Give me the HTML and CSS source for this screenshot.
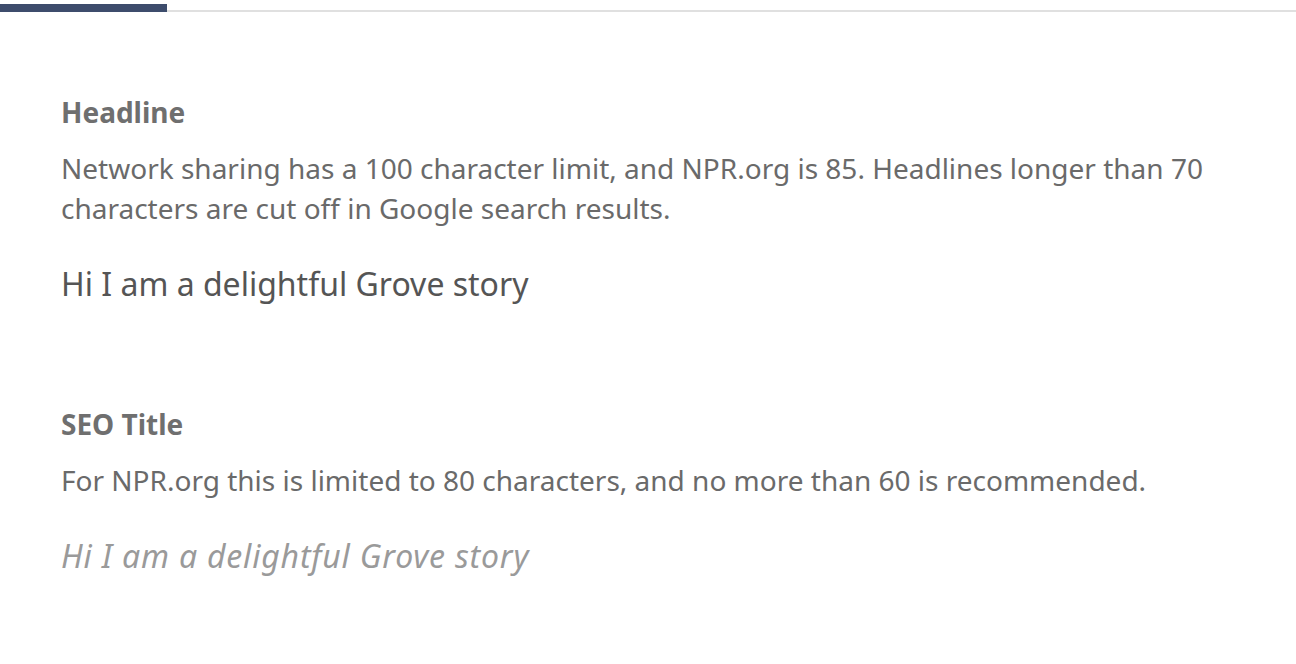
FILE: index.html
```html
<!DOCTYPE html>
<html lang="en">
  <head>
    <meta charset="UTF-8" />
    <meta name="viewport" content="width=device-width, initial-scale=1.0" />
    <title>Story Fields</title>
    <link rel="stylesheet" href="styles.css">
  </head>
  <body>
    <div class="progress">
      <div class="progress-bar"></div>
    </div>

    <div class="fields">
      <div class="field">
        <h3 class="field-label">Headline</h3>
        <p class="field-help">
          Network sharing has a 100 character limit, and NPR.org is 85. Headlines longer than 70
          characters are cut off in Google search results.
        </p>
        <div class="field-value">Hi I am a delightful Grove story</div>
      </div>

      <div class="field">
        <h3 class="field-label">SEO Title</h3>
        <p class="field-help">
          For NPR.org this is limited to 80 characters, and no more than 60 is recommended.
        </p>
        <div class="field-value placeholder">Hi I am a delightful Grove story</div>
      </div>
    </div>
  </body>
</html>
```

FILE: styles.css
```css
/* Reset */
body {
  margin: 0;
  font-family: "Noto Sans", "Open Sans", sans-serif;
  background: #fff;
  color: #666;
}

/* Progress bar at top */
.progress {
  position: relative;
  height: 12px;
  border-bottom: 2px solid #e0e0e0;
  box-sizing: border-box;
}

.progress-bar {
  position: absolute;
  left: 0;
  top: 4px;
  width: 167px;
  height: 8px;
  background: #3d4c6c;
}

/* Fields */
.fields {
  padding: 80px 61px 0;
}

.field {
  margin-bottom: 98px;
}

.field-label {
  margin: 0;
  font-size: 28px;
  font-weight: 700;
  color: #6f6f6f;
  line-height: 40px;
}

.field-help {
  margin: 16px 0 0;
  font-size: 28px;
  line-height: 40px;
  color: #6a6a6a;
  max-width: 1160px;
}

.field-value {
  margin-top: 34px;
  font-size: 32px;
  line-height: 44px;
  color: #555;
}

.field-value.placeholder {
  font-style: italic;
  letter-spacing: 0.8px;
  color: #9a9a9a;
}
```
